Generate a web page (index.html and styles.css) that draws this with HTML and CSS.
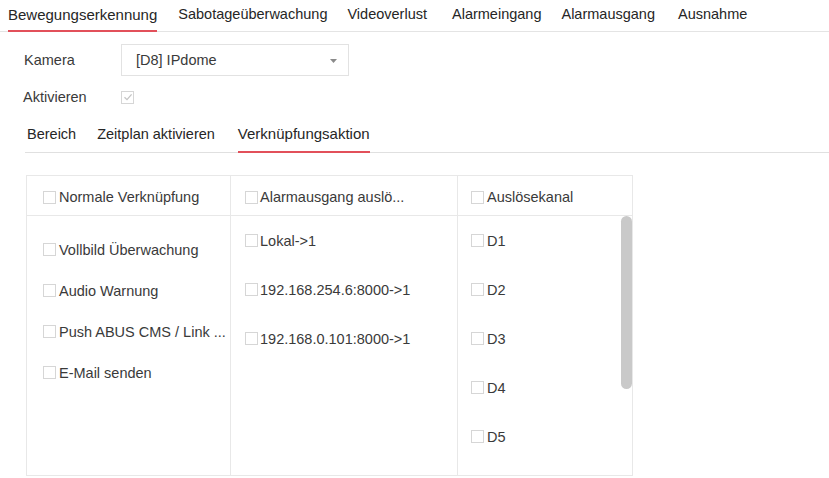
FILE: index.html
```html
<!DOCTYPE html>
<html lang="de">
<head>
<meta charset="utf-8">
<title>Bewegungserkennung</title>
<link rel="stylesheet" href="styles.css">
</head>
<body>
<div class="tabs">
  <div class="tab active">Bewegungserkennung</div>
  <div class="tab">Sabotageüberwachung</div>
  <div class="tab">Videoverlust</div>
  <div class="tab">Alarmeingang</div>
  <div class="tab">Alarmausgang</div>
  <div class="tab">Ausnahme</div>
</div>
<div class="form">
  <div class="row row-select">
    <span class="label">Kamera</span>
    <div class="select">
      <span>[D8] IPdome</span>
      <svg class="caret" width="7" height="4" viewBox="0 0 7 4"><path d="M0 0H7L3.5 4Z" fill="#8a8a8a"/></svg>
    </div>
  </div>
  <div class="row row-check">
    <span class="label">Aktivieren</span>
    <span class="cb checked"><svg width="10" height="10" viewBox="0 0 10 10"><path d="M1.5 5.2L4 7.6L8.6 2.4" fill="none" stroke="#c4c4c4" stroke-width="1.3"/></svg></span>
  </div>
</div>
<div class="subtabs">
  <div class="subtab">Bereich</div>
  <div class="subtab">Zeitplan aktivieren</div>
  <div class="subtab active">Verknüpfungsaktion</div>
</div>
<div class="table">
  <div class="col c1">
    <div class="head"><span class="cb"></span><span class="t">Normale Verknüpfung</span></div>
    <div class="body">
      <div class="item"><span class="cb"></span><span class="t">Vollbild Überwachung</span></div>
      <div class="item"><span class="cb"></span><span class="t">Audio Warnung</span></div>
      <div class="item"><span class="cb"></span><span class="t">Push ABUS CMS / Link ...</span></div>
      <div class="item"><span class="cb"></span><span class="t">E-Mail senden</span></div>
    </div>
  </div>
  <div class="col c2">
    <div class="head"><span class="cb"></span><span class="t">Alarmausgang auslö...</span></div>
    <div class="body">
      <div class="item"><span class="cb"></span><span class="t">Lokal-&gt;1</span></div>
      <div class="item"><span class="cb"></span><span class="t">192.168.254.6:8000-&gt;1</span></div>
      <div class="item"><span class="cb"></span><span class="t">192.168.0.101:8000-&gt;1</span></div>
    </div>
  </div>
  <div class="col c3">
    <div class="head"><span class="cb"></span><span class="t">Auslösekanal</span></div>
    <div class="body">
      <div class="item"><span class="cb"></span><span class="t">D1</span></div>
      <div class="item"><span class="cb"></span><span class="t">D2</span></div>
      <div class="item"><span class="cb"></span><span class="t">D3</span></div>
      <div class="item"><span class="cb"></span><span class="t">D4</span></div>
      <div class="item"><span class="cb"></span><span class="t">D5</span></div>
      <div class="thumb"></div>
    </div>
  </div>
</div>
</body>
</html>
```
FILE: styles.css
```css
* { box-sizing: border-box; }
html, body { margin: 0; padding: 0; background: #fff; }
body {
  font-family: "Liberation Sans", Arial, sans-serif;
  font-size: 14.5px;
  color: #3a3a3a;
  width: 829px;
  height: 478px;
  overflow: hidden;
}

.tabs {
  display: flex;
  padding-left: 8px;
  border-bottom: 1px solid #e4e4e4;
  height: 32px;
}
.tab {
  line-height: 29px;
  height: 32px;
  border-bottom: 2px solid transparent;
  margin-bottom: -1px;
  margin-right: 21px;
  color: #262626;
}
.tab:nth-child(2) { margin-right: 20px; }
.tab:nth-child(3) { margin-right: 25px; }
.tab:nth-child(4) { margin-right: 20px; }
.tab:nth-child(5) { margin-right: 23px; }
.tab.active { border-bottom-color: #e2505a; font-size: 15px; }

.form { padding-left: 24px; }
.row { display: flex; align-items: center; }
.label { width: 97px; color: #3a3a3a; }
.row-select { margin-top: 12px; }
.select {
  width: 228px;
  height: 32px;
  border: 1px solid #e2e2e2;
  display: flex;
  align-items: center;
  justify-content: space-between;
  padding: 0 11px 0 14px;
  color: #3a3a3a;
}
.caret { margin-top: 1px; }
.row-check { height: 26px; margin-top: 8px; }
.row-check .label { width: 98px; margin-left: -1px; }

.cb {
  display: inline-flex;
  align-items: center;
  justify-content: center;
  width: 13px;
  height: 13px;
  border: 1px solid #d6d6d6;
  background: #fff;
  flex: none;
}

.subtabs {
  display: flex;
  margin: 10px 0 0 25px;
  border-bottom: 1px solid #e0e0e0;
  height: 33px;
  padding-left: 2px;
}
.subtab {
  line-height: 28px;
  height: 33px;
  border-bottom: 2px solid transparent;
  margin-bottom: -1px;
  color: #262626;
}
.subtab:nth-child(1) { margin-right: 21px; }
.subtab:nth-child(2) { margin-right: 23px; }
.subtab.active { border-bottom-color: #e2505a; font-size: 15px; }

.table {
  margin: 22px 0 0 26px;
  width: 607px;
  height: 301px;
  border: 1px solid #e8e8e8;
  display: grid;
  grid-template-columns: 203px 227px 1fr;
}
.col { display: flex; flex-direction: column; }
.col + .col { border-left: 1px solid #e8e8e8; }
.head {
  height: 40px;
  border-bottom: 1px solid #e8e8e8;
  display: flex;
  align-items: center;
  padding-top: 3px;
}
.body { flex: 1; position: relative; }
.item { display: flex; align-items: center; }
.t { white-space: nowrap; }

.c1 .head, .c1 .item { padding-left: 16px; }
.c1 .cb { margin-right: 3px; }
.c1 .body { padding-top: 13px; }
.c1 .item { height: 41px; }

.c2 .head, .c2 .item { padding-left: 14px; }
.c2 .cb { margin-right: 2px; }
.c2 .item { height: 49px; }

.c3 .head, .c3 .item { padding-left: 13px; }
.c3 .cb { margin-right: 3px; }
.c3 .item { height: 49px; }

.thumb {
  position: absolute;
  top: 0;
  right: 0;
  width: 11px;
  height: 173px;
  border-radius: 6px;
  background: #c9c9c9;
}
```
